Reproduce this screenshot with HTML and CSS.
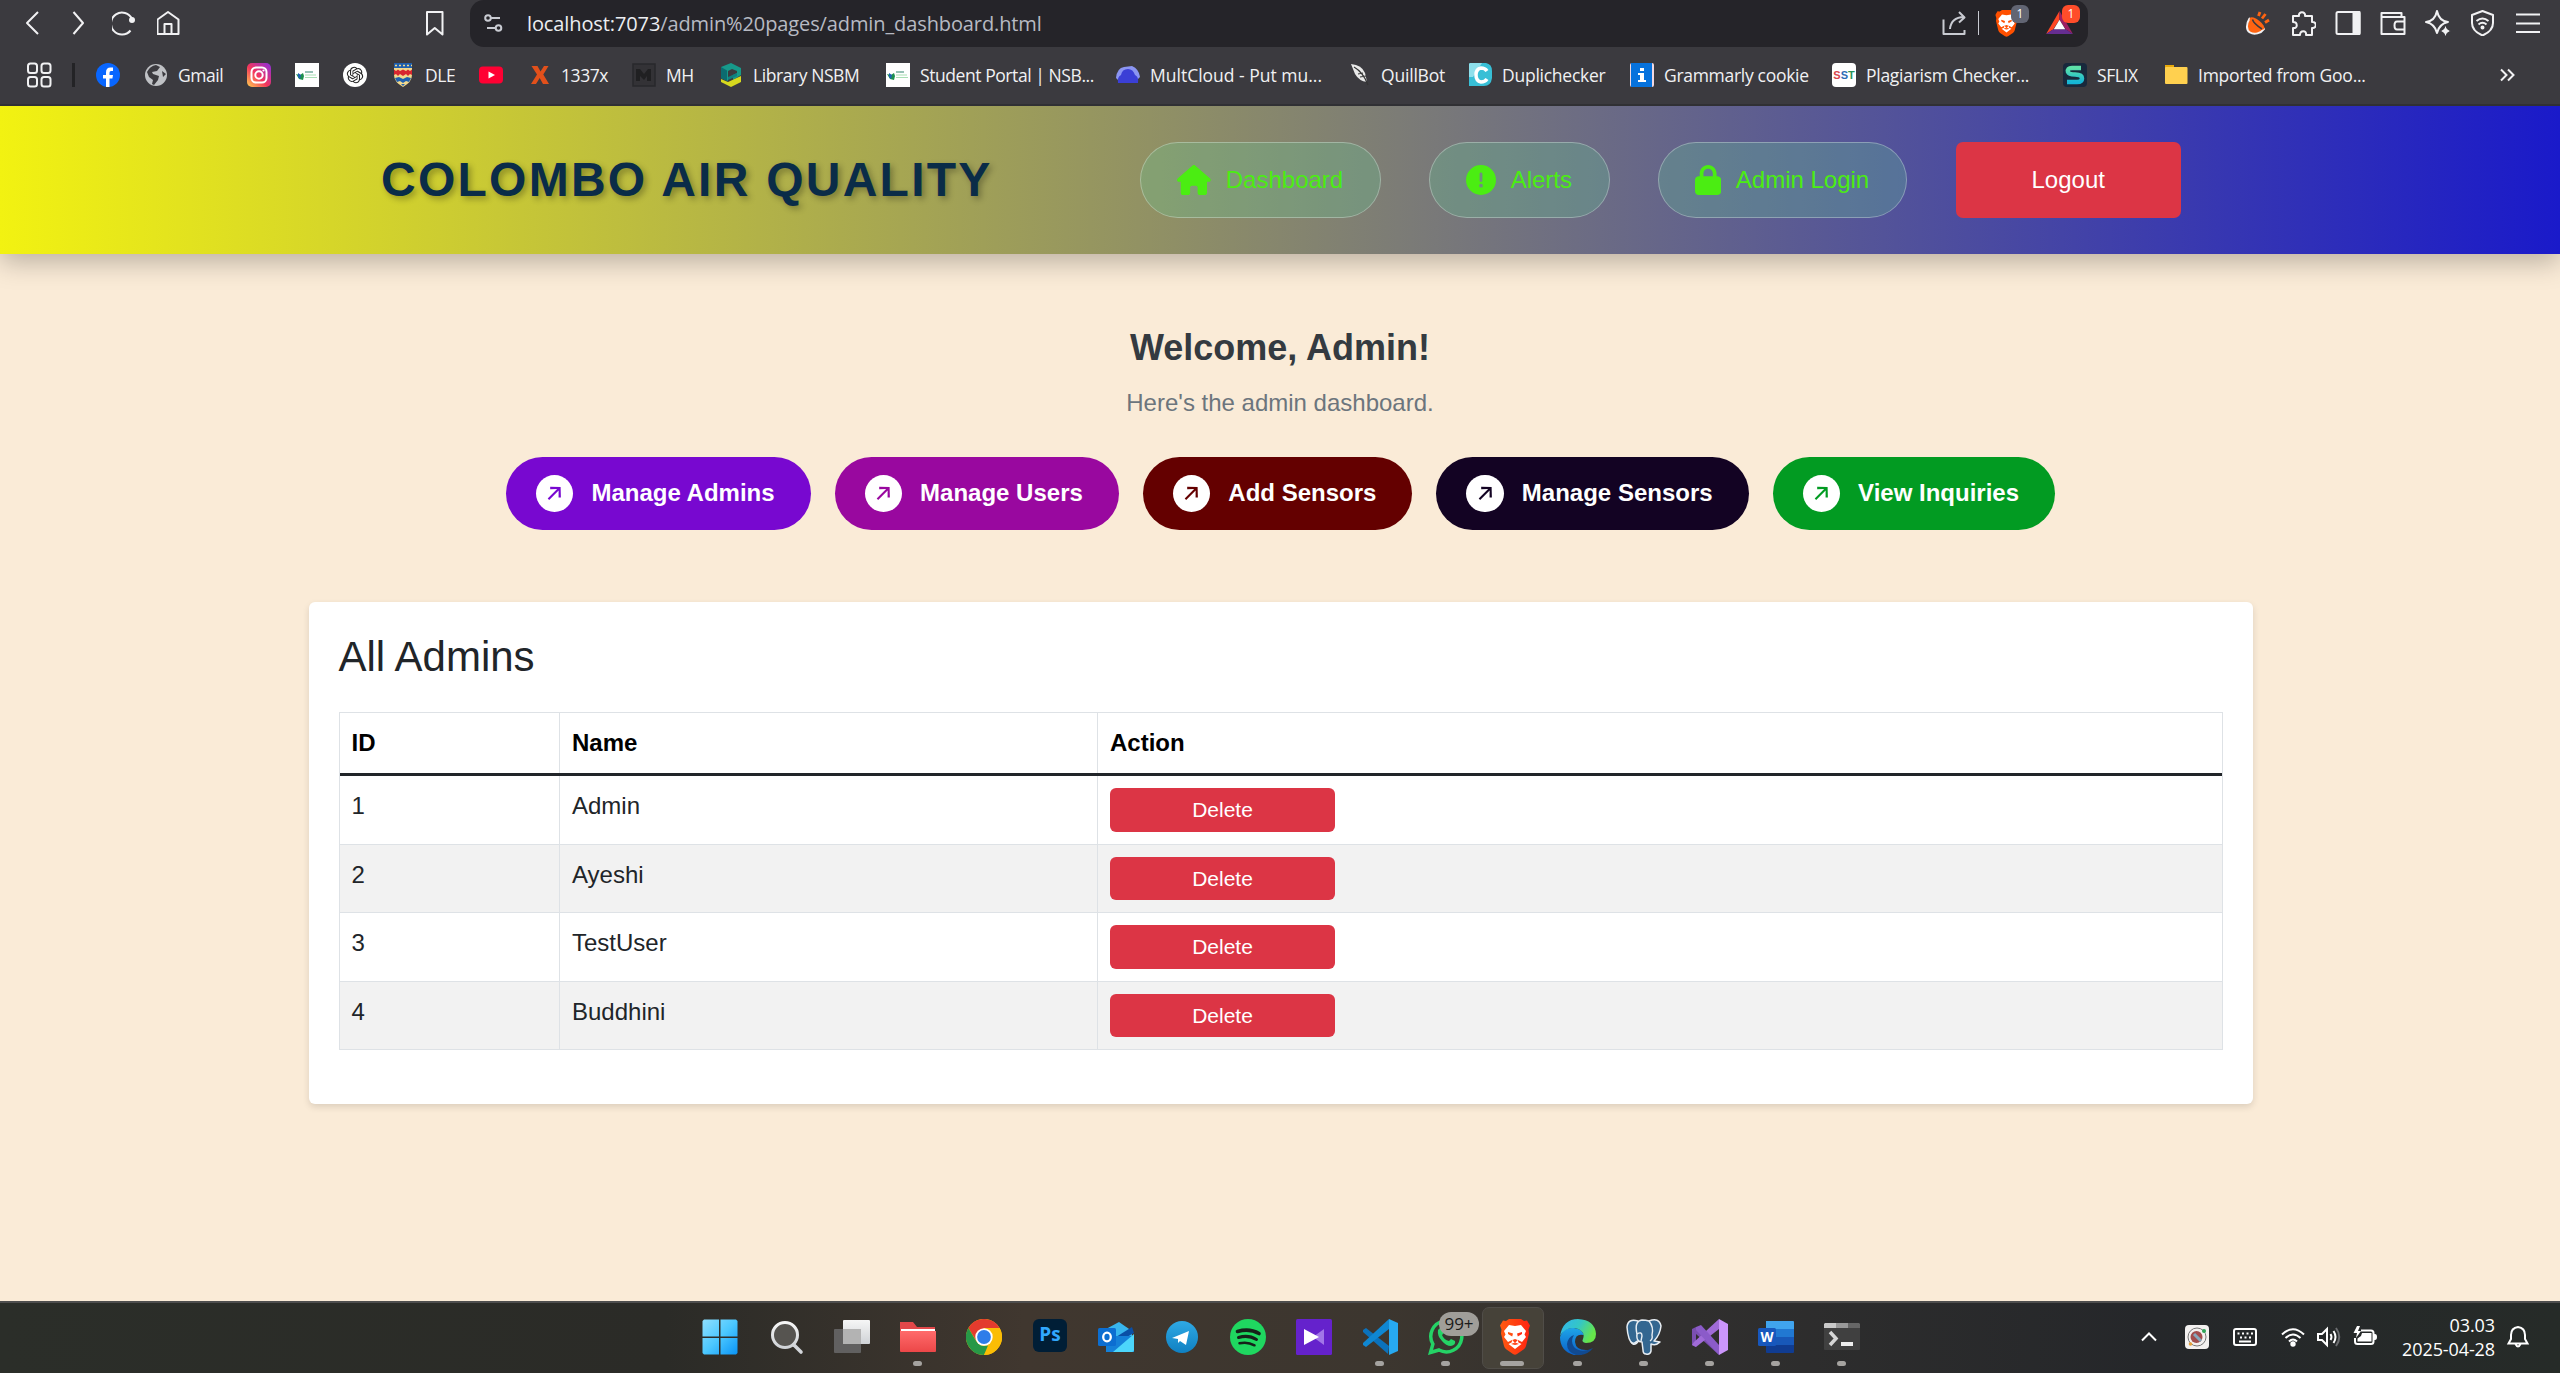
FILE: index.html
```html
<!DOCTYPE html>
<html lang="en">
<head>
<meta charset="utf-8">
<title>Admin Dashboard</title>
<link rel="stylesheet" href="styles.css">
</head>
<body>
<svg class="defs" width="0" height="0" aria-hidden="true">
  <defs>
    <linearGradient id="g-insta" x1="0" y1="1" x2="1" y2="0"><stop offset="0" stop-color="#ffd14f"/><stop offset=".45" stop-color="#f4365b"/><stop offset="1" stop-color="#8a2fe0"/></linearGradient>
    <linearGradient id="g-win" x1="0" y1="0" x2="1" y2="1"><stop offset="0" stop-color="#8fe0ff"/><stop offset=".5" stop-color="#4cc8ff"/><stop offset="1" stop-color="#0a94f5"/></linearGradient>
    <linearGradient id="g-brave" x1="0" y1="0" x2="1" y2="0"><stop offset="0" stop-color="#ff5a10"/><stop offset="1" stop-color="#ff2412"/></linearGradient>
    <linearGradient id="g-folder" x1="0" y1="0" x2="0" y2="1"><stop offset="0" stop-color="#ff6b6b"/><stop offset="1" stop-color="#ec4748"/></linearGradient>
    <linearGradient id="g-tele" x1="0" y1="0" x2="0" y2="1"><stop offset="0" stop-color="#2fa9e4"/><stop offset="1" stop-color="#0f80c2"/></linearGradient>
    <linearGradient id="g-edge1" x1="0" y1="0" x2="1" y2=".4"><stop offset="0" stop-color="#2fb4f2"/><stop offset=".55" stop-color="#35c7c4"/><stop offset="1" stop-color="#66e54a"/></linearGradient>
    <linearGradient id="g-edge2" x1="0" y1="0" x2="0" y2="1"><stop offset="0" stop-color="#1ea5e8"/><stop offset="1" stop-color="#0a5fc8"/></linearGradient>
    <linearGradient id="g-sflix" x1="0" y1="0" x2="0" y2="1"><stop offset="0" stop-color="#5ee2a8"/><stop offset="1" stop-color="#15b6d6"/></linearGradient>
    <linearGradient id="g-grey" x1="0" y1="0" x2="0" y2="1"><stop offset="0" stop-color="#f6f6f6"/><stop offset="1" stop-color="#cfd2d6"/></linearGradient>
    <symbol id="nsbm" viewBox="0 0 24 24"><path fill="#fff" d="M0 0h24v24H0z"/><path fill="#1c8f4d" d="M1 11l4 1 3-2 1 3-1 4-4-1z"/><path fill="#1d62b5" d="M3 10l3 2-1 4-2-2z"/><path stroke="#5f9f8f" stroke-width="1.300" d="M10 9h8"/><path stroke="#a9dfb4" d="M10 12h11M10 14.500h12"/></symbol>
    <symbol id="arrow" viewBox="0 0 14 15"><path fill="currentColor" d="M13.376 11.552l-.264-10.440-10.440-.240.024 2.280 6.960-.048L.2 12.560l1.488 1.488 9.432-9.432-.048 6.912 2.304.024z"/></symbol>
    <symbol id="lion" viewBox="0 0 30 36"><path d="M6 2l3-2h12l3 2 3-.5 3 5-1.500 4 .5 4-3 12.500q-.6 2-2.500 3.500L17 35q-2 1.300-4 0l-6.500-4.500Q4.600 29 4 27L1 14.500l.5-4L0 6.500l3-5z"/><path fill="#fff" d="M9 6l6 1 6-1 5 6-1.500 3.500L26 18l-4 5-4.500-2.200 1 2.700 3 1.500-6.500 5-6.500-5 3-1.500 1-2.700L8 23l-4-5 1.500-2.500L4 12z"/><path d="M8 13l5 1.500-.8 3L8 15zM22 13l-5 1.500.8 3L22 15zM12.500 21L15 24.500 17.500 21 15 20zM11 25l4-1.400 4 1.400-4 1z"/></symbol>
  </defs>
</svg>

<div class="browser">
  <div class="toolbar">
    <div class="nav-controls">
      <svg viewBox="0 0 26 26"><path d="M16 2L5 13l11 11"/></svg>
      <svg viewBox="0 0 26 26"><path d="M6.500 2L16 13 6.500 24"/></svg>
      <svg viewBox="0 0 26 26"><path d="M18.500 20.500A11 11 0 1 1 20 9"/><circle cx="20" cy="10" r="3" fill="#f1f1f3" stroke="none"/></svg>
      <svg viewBox="0 0 26 26"><path d="M.5 9.500L11 2l10.500 7.500V24H.5zM7.500 24v-10h7v10"/></svg>
    </div>
    <svg class="bookmark-toggle" viewBox="0 0 26 26"><path d="M5 2h15.500v22.500l-7.750-6.500L5 24.500z"/></svg>
    <div class="address">
      <svg class="tune" viewBox="0 0 20 20"><circle cx="4" cy="5" r="2.800"/><path d="M7 5h9M3 15h8"/><circle cx="14.500" cy="15" r="2.800"/></svg>
      <span class="url"><span class="host">localhost:7073</span>/admin%20pages/admin_dashboard.html</span>
      <div class="address-actions">
        <svg class="share" viewBox="0 0 26 26"><path d="M2.500 9.500V24h21v-4M9 19q1-11.500 14-12M18 2l5.500 5.500L18 12.500"/></svg>
        <span class="divider"></span>
        <span class="badged"><svg class="shield" viewBox="0 0 30 36" fill="#ff5000"><use href="#lion"/></svg><b class="count grey">1</b></span>
        <span class="badged"><svg class="bat" viewBox="0 0 28 24"><path fill="#ff4724" d="M14 0v9L7.500 19 0 24z"/><path fill="#9e1f63" d="M14 0l14 24-7.500-5L14 9z"/><path fill="#662d91" d="M0 24h28l-7.500-5h-13z"/><path fill="#fff" d="M14 9l6 10H8z"/></svg><b class="count red">1</b></span>
      </div>
    </div>
    <div class="extensions">
      <svg viewBox="0 0 26 26"><path fill="#ff6411" d="M4.500 8.500C1 14 1 20 5 22.500s11 1 14-3.500z"/><ellipse cx="12" cy="13.500" rx="9" ry="3.600" transform="rotate(38 12 13.500)" fill="#ff6411" stroke="none"/><path stroke="#3b3a3f" stroke-width="1.500" d="M7.500 9.500q1 4 9.500 9.500"/><path stroke="#ff6411" stroke-width="2.800" d="M13.500 6L15 2M17 8.500l3.500-4.500M20 12.500l4-2.500"/></svg>
      <svg viewBox="0 0 26 26"><path d="M3 6h6c-1-5 7-5 6 0h7v6c5-1 5 7 0 6v7h-6c1-5-6-5-6 0H3v-7c5 1 5-6 0-6z"/></svg>
      <svg viewBox="0 0 26 26"><rect x="1.500" y="2" width="23" height="22" rx="1.500"/><path fill="#f1f1f3" d="M18.500 2h6v22h-6z"/></svg>
      <svg viewBox="0 0 26 26"><path d="M1.500 3h20v4h3v17h-23zM1.500 7h20M24.500 11.500H17q-2.500 0-2.500 4t2.500 4h7.500"/></svg>
      <svg viewBox="0 0 26 26"><path d="M12 1q2 10 11 11-9 2-11 11-2-9-11-11Q10 11 12 1z"/><path fill="#f1f1f3" stroke="#3b3a3f" stroke-width="1" d="M20.500 15q1 5 5.500 6-4.500 1-5.500 6-1-5-5.500-6 4.500-1 5.500-6z"/></svg>
      <svg viewBox="0 0 26 26"><path d="M12.500 1L23 5v8q0 8-10.500 12.500Q2 21 2 13V5zM6.500 11q6-5 12 0M8.500 14.500q4-3.500 8 0"/><circle cx="12.500" cy="17.500" r="1" fill="#f1f1f3"/></svg>
      <svg viewBox="0 0 26 26"><path d="M1 4.500h24M1 13.500h24M1 22h24"/></svg>
    </div>
  </div>

  <div class="bookmarks">
    <svg class="apps" viewBox="0 0 26 26"><rect x="2" y="1.500" width="9" height="9.500" rx="2.500"/><rect x="15.500" y="1.500" width="9" height="9.500" rx="2.500"/><rect x="2" y="15" width="9" height="9.500" rx="2.500"/><rect x="15.500" y="15" width="9" height="9.500" rx="2.500"/></svg>
    <span class="bar"></span>
    <div class="bm w-fb"><svg viewBox="0 0 24 24"><circle cx="12" cy="12" r="12" fill="#0866ff"/><path fill="#fff" d="M10 24v-8.500H7V12h3v-2.500Q10 4.500 14.500 4.500H17V8h-2q-1.500 0-1.500 1.800V12H17l-.6 3.500h-2.900V24z"/></svg></div>
    <div class="bm w-gmail"><svg viewBox="0 0 24 24"><circle cx="12" cy="12" r="11" fill="#bfc1c5"/><path fill="#3b3a3f" d="M3 9q3-6 9-7l4 2-3 4-5 1 1 2 6 2-1 4-4 5-2-1 1-4-4-3zM18 8l4 3-3 3z"/></svg><span>Gmail</span></div>
    <div class="bm w-icon"><svg viewBox="0 0 24 24"><rect width="24" height="24" rx="5" fill="url(#g-insta)"/><g fill="none" stroke="#fff" stroke-width="2"><rect x="4.500" y="4.500" width="15" height="15" rx="4.500"/><circle cx="12" cy="12" r="3.700"/></g><circle cx="16.500" cy="7.500" r="1.100" fill="#fff"/></svg></div>
    <div class="bm w-icon"><svg viewBox="0 0 24 24"><use href="#nsbm"/></svg></div>
    <div class="bm w-icon"><svg viewBox="0 0 24 24"><circle cx="12" cy="12" r="12" fill="#fff"/><path transform="translate(3.800 3.800) scale(.684)" fill="#222" d="M22.282 9.821a5.985 5.985 0 0 0-.516-4.910 6.046 6.046 0 0 0-6.510-2.900A6.065 6.065 0 0 0 4.981 4.182a5.985 5.985 0 0 0-3.998 2.900 6.046 6.046 0 0 0 .743 7.097 5.980 5.980 0 0 0 .511 4.911 6.051 6.051 0 0 0 6.515 2.900A5.985 5.985 0 0 0 13.260 24a6.056 6.056 0 0 0 5.772-4.206 5.990 5.990 0 0 0 3.998-2.900 6.056 6.056 0 0 0-.748-7.073zm-9.022 12.608a4.476 4.476 0 0 1-2.876-1.041l.142-.080 4.778-2.758a.795.795 0 0 0 .393-.681v-6.737l2.020 1.169a.071.071 0 0 1 .038.052v5.583a4.504 4.504 0 0 1-4.495 4.493zM3.600 18.304a4.471 4.471 0 0 1-.535-3.014l.142.085 4.783 2.759a.771.771 0 0 0 .781 0l5.843-3.369v2.332a.080.080 0 0 1-.033.062L9.740 19.950a4.499 4.499 0 0 1-6.140-1.646zM2.341 7.896a4.485 4.485 0 0 1 2.366-1.973V11.600a.766.766 0 0 0 .388.677l5.815 3.354-2.020 1.169a.076.076 0 0 1-.071 0l-4.830-2.787A4.504 4.504 0 0 1 2.341 7.872zm16.596 3.856l-5.833-3.388L15.119 7.200a.076.076 0 0 1 .071 0l4.830 2.791a4.494 4.494 0 0 1-.676 8.105v-5.678a.790.790 0 0 0-.407-.667zm2.011-3.023l-.142-.085-4.773-2.782a.776.776 0 0 0-.786 0L9.409 9.230V6.897a.066.066 0 0 1 .028-.061l4.830-2.787a4.499 4.499 0 0 1 6.681 4.660zM8.307 12.863l-2.020-1.164a.080.080 0 0 1-.038-.057V6.075a4.499 4.499 0 0 1 7.376-3.454l-.142.081-4.778 2.758a.795.795 0 0 0-.393.682zm1.098-2.365l2.602-1.500 2.607 1.500v2.999l-2.597 1.500-2.607-1.500z"/></svg></div>
    <div class="bm w-dle"><svg viewBox="0 0 24 24"><path fill="#f2d98c" d="M3 0h18v12q0 7-9 12-9-5-9-12z"/><path fill="#1f5fae" d="M3 0h18v5H3z"/><path stroke="#f2d98c" stroke-width="1.600" stroke-dasharray="2 2" d="M4 2.500h17"/><path fill="#d8262f" d="M3 6.500l2 1.500 2-1.500L9 8l3-1.500L15 8l2-1.500L19 8l2-1.500V12l-2-1-2 2-2-2-3 2-3-2-2 2-2-2-2 1z"/><path fill="#1f5fae" d="M4 15l4-1 4 2 4-2 4 1-2 4-3-1-3 2-3-2-3 1zM10 21h4l-2 2z"/></svg><span>DLE</span></div>
    <div class="bm w-icon"><svg viewBox="0 0 24 24"><rect y="3.500" width="24" height="17" rx="4" fill="#ff0033"/><path fill="#fff" d="M9.500 8.500l6.500 3.500-6.500 3.500z"/></svg></div>
    <div class="bm w-1337"><svg viewBox="0 0 24 24"><path fill="#e2501b" d="M4.500 3h6l3 5.500L17 3h4.500l-5.200 8.500L22 21h-6l-3.300-6L9 21H4l6-9.500z"/></svg><span>1337x</span></div>
    <div class="bm w-mh"><svg viewBox="0 0 24 24"><path fill="#333236" stroke="#29282c" stroke-width="1.500" d="M1 1h22v22H1z"/><path fill="#202022" d="M4 18V6h4l4 5 4-5h3v12h-4v-5l-3 4-4-4v5z"/></svg><span>MH</span></div>
    <div class="bm w-lib"><svg viewBox="0 0 24 24"><path fill="#17998a" d="M2 4l10-4 10 5v7l-8 5V12l4-2V8l-5-2-4 2v10l-7-3z"/><path fill="#0c6b70" d="M2 4l6 3.500V18l-6-3z"/><path fill="#0f7f80" d="M9 14l9-4v3l-9 4z"/><path fill="#d7d91e" d="M2 16l7 3 13-6v6l-10 5-10-5z"/></svg><span>Library NSBM</span></div>
    <div class="bm w-student"><svg viewBox="0 0 24 24"><use href="#nsbm"/></svg><span>Student Portal | NSB...</span></div>
    <div class="bm w-mult"><svg viewBox="0 0 24 24"><path fill="#8b95f2" d="M0 15Q1 5 8 4l8-1q7 3 8 11l-4 4H3z"/><path fill="#3b3fd6" d="M2 20q-1-6 3-8 1-6 7-6 5 0 7 6 4 2 3 8z"/></svg><span>MultCloud - Put mu...</span></div>
    <div class="bm w-quill"><svg viewBox="0 0 24 24"><path fill="#e9e9e9" d="M4 1q11 1 14 9l2 9q-8-1-12-8z"/><path stroke="#333" stroke-width="1.200" fill="none" d="M7 4q9 5 14 18M11 11l5-1M13 14l6-1"/></svg><span>QuillBot</span></div>
    <div class="bm w-dup"><svg viewBox="0 0 24 24"><path fill="#38bfd6" d="M2 0h16q6 1 6 8v7q-1 8-8 8H1V1z"/><path fill="#8ee0ec" d="M2 0h12L5 14H1V1z"/><path fill="none" stroke="#fff" stroke-width="3.500" d="M19 8q-2-3-6-3-5 1-5 7t5 7q4 0 6-3"/></svg><span>Duplichecker</span></div>
    <div class="bm w-gram"><svg viewBox="0 0 24 24"><rect width="24" height="24" rx="2" fill="#f2d9e2"/><rect x="1" width="21" height="24" fill="#0672dd"/><path fill="#fff" d="M8 10h6v7h2v2H8v-2h2v-5H8zM10 5h4v3h-4z"/></svg><span>Grammarly cookie</span></div>
    <div class="bm w-sst"><span class="sst"><i>S</i><em>S</em><u>T</u></span><span>Plagiarism Checker...</span></div>
    <div class="bm w-sflix"><svg viewBox="0 0 24 24"><rect width="24" height="24" rx="4" fill="#18293c"/><path fill="none" stroke="url(#g-sflix)" stroke-width="4.500" d="M18 5H9q-5 0-4 4 1 2.500 7 2.500 7 0 7 4 0 3.500-5 3.500H4"/></svg><span>SFLIX</span></div>
    <div class="bm w-folder"><svg viewBox="0 0 24 24"><path fill="#e8a90c" d="M1 2h9v5H1z"/><rect x="1" y="4" width="22.500" height="17" rx="1" fill="#ffd04f"/></svg><span>Imported from Goo...</span></div>
    <svg class="more" viewBox="0 0 16 16"><path d="M2 2.500L7.500 8 2 13.500M9 2.500L14.500 8 9 13.500"/></svg>
  </div>
</div>

<main class="page">
  <header class="site-header">
    <h1>COLOMBO AIR QUALITY</h1>
    <nav>
      <a class="pill"><svg width="33.750" height="30" viewBox="0 0 576 512"><path d="M575.800 255.500c0 18-15 32.100-32 32.100h-32l.7 160.200c0 2.700-.2 5.400-.5 8.100V472c0 22.100-17.900 40-40 40H392c-22.100 0-40-17.900-40-40v-88c0-17.700-14.300-32-32-32h-64c-17.700 0-32 14.300-32 32v88c0 22.100-17.900 40-40 40h-80c-22.100 0-40-17.900-40-40V287.600H32c-18 0-32-14-32-32.100 0-9 3-17 10-24L266.400 8c7-7 15-8 22-8s15 2 21 7l255.400 224.500c8 7 12 15 11 24z"/></svg>Dashboard</a>
      <a class="pill"><svg width="30" height="30" viewBox="0 0 512 512"><path d="M256 512a256 256 0 1 0 0-512 256 256 0 1 0 0 512zm0-384c13.300 0 24 10.700 24 24v112c0 13.300-10.700 24-24 24s-24-10.700-24-24V152c0-13.300 10.700-24 24-24zm-32 224a32 32 0 1 1 64 0 32 32 0 1 1-64 0z"/></svg>Alerts</a>
      <a class="pill"><svg width="26.250" height="30" viewBox="0 0 448 512"><path d="M144 144v48h160v-48c0-44.200-35.800-80-80-80s-80 35.800-80 80zm-64 48v-48C80 64.500 144.500 0 224 0s144 64.500 144 144v48h16c35.300 0 64 28.700 64 64v192c0 35.300-28.700 64-64 64H64c-35.300 0-64-28.700-64-64V256c0-35.300 28.700-64 64-64h16z"/></svg>Admin Login</a>
      <button class="logout">Logout</button>
    </nav>
  </header>

  <section class="welcome">
    <h2>Welcome, Admin!</h2>
    <p>Here's the admin dashboard.</p>
  </section>

  <div class="actions">
    <a class="action violet"><span><svg><use href="#arrow"/></svg></span><b>Manage Admins</b></a>
    <a class="action magenta"><span><svg><use href="#arrow"/></svg></span><b>Manage Users</b></a>
    <a class="action maroon"><span><svg><use href="#arrow"/></svg></span><b>Add Sensors</b></a>
    <a class="action navy"><span><svg><use href="#arrow"/></svg></span><b>Manage Sensors</b></a>
    <a class="action green"><span><svg><use href="#arrow"/></svg></span><b>View Inquiries</b></a>
  </div>

  <section class="card">
    <h3>All Admins</h3>
    <div class="table">
      <div class="row head"><div>ID</div><div>Name</div><div>Action</div></div>
      <div class="row"><div>1</div><div>Admin</div><div><button>Delete</button></div></div>
      <div class="row striped"><div>2</div><div>Ayeshi</div><div><button>Delete</button></div></div>
      <div class="row"><div>3</div><div>TestUser</div><div><button>Delete</button></div></div>
      <div class="row striped"><div>4</div><div>Buddhini</div><div><button>Delete</button></div></div>
    </div>
  </section>
</main>

<footer class="taskbar">
  <div class="apps-row">
    <div class="app"><svg viewBox="0 0 36 36"><path fill="url(#g-win)" d="M2 .5h15v17H.5V2zM18.500.5H34L35.500 2v15.500h-17zM.5 19H17v16.500H2L.5 34zM18.500 19h17v15L34 35.500H18.500z"/></svg></div>
    <div class="app"><svg viewBox="0 0 36 36"><circle cx="17" cy="16" r="12.500" fill="#565450" stroke="url(#g-grey)" stroke-width="3"/><path stroke="#d3d6da" stroke-width="3.600" stroke-linecap="round" d="M26 26l7 7"/></svg></div>
    <div class="app"><svg viewBox="0 0 36 36"><rect x="9" y="1" width="27" height="24" rx="1" fill="url(#g-grey)"/><rect y="10" width="27" height="24" rx="1" fill="#666" fill-opacity=".9"/><path fill="#b3b3b3" d="M9 10h18v15H9z"/></svg></div>
    <div class="app on"><svg viewBox="0 0 36 36"><path fill="#e2484a" d="M0 3h13l4 5h18v12H0z"/><path fill="#fff" d="M1 10h34v3H1z"/><path fill="url(#g-folder)" d="M0 12h36v20q0 1-1 1H1q-1 0-1-1z"/></svg></div>
    <div class="app"><svg viewBox="0 0 36 36"><circle cx="18" cy="18" r="18" fill="#fbbd05"/><path fill="#e33b2e" d="M2.400 9A18 18 0 0 1 33.600 9H18L10.500 22z"/><path fill="#279847" d="M2.400 9l8 13.500Q14 27 18 27l4-.5L18 36A18 18 0 0 1 2.400 9z"/><path fill="#fbbd05" d="M18 9h15.600A18 18 0 0 1 18 36l8-13.500z"/><circle cx="18" cy="18" r="8.700" fill="#fff"/><circle cx="18" cy="18" r="6.900" fill="#2f7de9"/></svg></div>
    <div class="app"><span class="ps">Ps</span></div>
    <div class="app"><svg viewBox="0 0 36 36"><path fill="#38b6ee" d="M8 10l13-7 13 9v8H8z"/><path fill="#0a4fa6" d="M18 18l16-10 2 6-18 10z"/><path fill="#1480d8" d="M8 17h28v16H8z"/><path fill="#4cd6fb" d="M36 15v16q0 2-2 2H15z"/><rect y="9" width="18" height="18" rx="1.500" fill="#0c6ed1"/><ellipse cx="9" cy="18" rx="3.800" ry="4.400" fill="none" stroke="#fff" stroke-width="2.300"/></svg></div>
    <div class="app"><svg viewBox="0 0 36 36"><circle cx="18" cy="18" r="16" fill="url(#g-tele)"/><path fill="#fff" d="M8 19l17-7-3 14-6-4-2 2v-4z"/></svg></div>
    <div class="app"><svg viewBox="0 0 36 36"><circle cx="18" cy="18" r="18" fill="#1fd760"/><g fill="none" stroke="#16211a" stroke-linecap="round"><path stroke-width="3.600" d="M7.500 12.500q12-3.500 21.500 2"/><path stroke-width="3" d="M8.500 18.500q10-3 18 2"/><path stroke-width="2.500" d="M9.500 24.300q8-2 15 2"/></g></svg></div>
    <div class="app"><svg viewBox="0 0 36 36"><rect width="36" height="36" rx="1.500" fill="#6522cc"/><path fill="#a276e8" d="M28 10v16L17 18z"/><path fill="#fff" d="M8 10l15 8-15 8z"/></svg></div>
    <div class="app on"><svg viewBox="0 0 36 36"><path fill="#0b72bc" d="M1 11l3-2 23 18-1 8L1 13z"/><path fill="#0f87d2" d="M27 0L1 24v2l3 2 23-18z"/><path fill="#27a9f1" d="M27 0l9 4v28l-9 4z"/></svg></div>
    <div class="app on"><svg viewBox="0 0 36 36"><path fill="none" stroke="#25d366" stroke-width="3.500" d="M2.500 33.500l2.400-8.400A15.500 15.500 0 1 1 11 31z"/><path fill="#25d366" d="M10 11q3-4 5 0l1 3-2 2q2 5 7 6l2-2 4 2q1 4-4 5-5 0-9-5-5-5-4-11z"/></svg><b class="notify">99+</b></div>
    <div class="app on active"><svg viewBox="-3 0 36 36" fill="url(#g-brave)"><use href="#lion"/></svg></div>
    <div class="app on"><svg viewBox="0 0 36 36"><path fill="url(#g-edge2)" d="M0 18Q3 8 14 9q8 1 10 7-9-2-9 7 1 9 13 8-6 6-14 5Q0 32 0 18z"/><path fill="#114a91" d="M14 16q-4 6 0 12 7 7 19 1-6 8-17 7-9-3-9-11 1-7 7-9z"/><path fill="url(#g-edge1)" d="M0 17Q3 0 18 0q17 1 18 15 0 9-10 9-5-1-3-4 3-8-8-11Q5 8 0 17z"/></svg></div>
    <div class="app on"><svg viewBox="0 0 36 36"><g fill="#336791" stroke="#e8eef3" stroke-width="1.500" stroke-linejoin="round"><path d="M12 2Q2-1 1 8q1 14 6 17 3 1 6-4z"/><path d="M23 2q10-4 12 5-1 9-7 15l6 1q-4 4-9 2v7q-1 4-5 3-3 0-3-4l-1-8q-6 0-5-8Q8 2 16 1q4 0 7 1z"/></g><path fill="none" stroke="#e8eef3" stroke-width="1.400" d="M23 2q5 6 3 14 1 4-2 6M11 22q-4 4-6 1M11 15q5-3 5 2l-1 5"/></svg></div>
    <div class="app on"><svg viewBox="0 0 36 36"><path fill="#7a4fb0" d="M0 10l4-2v20l-4-2zM0 10l4-2 21 23 2 5L4 15z"/><path fill="#a06bd8" d="M0 26l4 2L27 10V0L2 23z"/><path fill="#8b5bc9" d="M4 8l5-2 18 20v10L4 11z"/><path fill="#cb95fb" d="M27 0l9 5v26l-9 5z"/></svg></div>
    <div class="app on"><svg viewBox="0 0 36 36"><path fill="#40a4ee" d="M8 2h27q1 0 1 1v7H8z"/><path fill="#2178d2" d="M8 10h28v8H8z"/><path fill="#1858b8" d="M8 18h28v8H8z"/><path fill="#103c91" d="M8 26h28v7q0 1-1 1H9q-1 0-1-1z"/><rect y="9" width="18" height="18" rx="1.500" fill="#1757bd"/><text x="9" y="23" text-anchor="middle" font-size="13.500" font-weight="700" fill="#fff">W</text></svg></div>
    <div class="app on"><svg viewBox="0 0 36 36"><path fill="#404040" d="M0 9h36v21q0 1-1 1H1q-1 0-1-1z"/><path fill="#c9c9c9" d="M1 4h11v5H0V5z"/><path fill="#999" d="M12 4h12v5H12z"/><path fill="#666" d="M24 4h11l1 1v4H24z"/><path fill="none" stroke="#d6d6d6" stroke-width="3.500" d="M6 13l6 6.500L6 26"/><path stroke="#eee" stroke-width="4" d="M17 25h12"/></svg></div>
  </div>
  <div class="tray">
    <svg class="chev" viewBox="0 0 16 16"><path d="M1 11.500L8 4.500l7 7"/></svg>
    <svg class="tool" viewBox="0 0 24 24"><rect width="24" height="24" rx="4" fill="#f3f1f0" stroke="none"/><circle cx="12" cy="12" r="9" stroke="#777" stroke-width="1"/><circle cx="11.500" cy="12" r="6" fill="#a14e4e" stroke="none"/><path stroke="#86a9bd" stroke-width="3" d="M9 9l7 7"/><circle cx="19" cy="6" r="2" fill="#2fa557" stroke="none"/><circle cx="5.500" cy="19" r="1.800" fill="#e8a33c" stroke="none"/></svg>
    <svg class="keys" viewBox="0 0 24 24"><rect x="1" y="4" width="22" height="16" rx="2"/><path stroke-dasharray="2 2.500" d="M4.500 8.500h16M7 12.500h11"/><path d="M6 16.500h12"/></svg>
    <svg class="wifi" viewBox="0 0 24 24"><path d="M1 9.500q11-10.500 22 0M4.500 13q7.500-7 15 0M8 16.500q4-4 8 0"/><circle cx="12" cy="19" r="1.700" fill="#fff"/></svg>
    <svg class="vol" viewBox="0 0 24 24"><path d="M1 9h4l5-5v16l-5-5H1zM13.500 9q2 3 0 6M16.500 6q4 6 0 12"/><path stroke="#6b6d70" d="M19 3q6.500 9 0 18"/></svg>
    <svg class="batt" viewBox="0 0 24 24"><path d="M8 5.500h10q2.500 0 2.500 2.500v8.500q0 2.500-2.500 2.500H4.500Q2 19 2 16.500V13"/><path fill="#fff" stroke="none" d="M9 8h9.500v8.500H4.500v-3L8 11zM21 9h1q2 0 2 3t-2 3h-1zM4 1L.5 8H4L3 13l5-7H5l2-5z"/></svg>
    <div class="clock"><span>03.03</span><span>2025-04-28</span></div>
    <svg class="bell" viewBox="0 0 24 24"><path d="M12 2q7 1 7 8v4l2.500 4.500h-19L5 14v-4q0-7 7-8zM9.500 19q2.500 5 5 0"/></svg>
  </div>
</footer>
</body>
</html>
```
FILE: styles.css
```css
* { box-sizing: border-box; }
body {
  margin: 0;
  width: 2560px;
  height: 1373px;
  overflow: hidden;
  display: flex;
  flex-direction: column;
  background: #faebd7;
  font-family: "Liberation Sans", Arial, sans-serif;
  font-size: 24px;
  color: #212529;
}
.defs { position: absolute; }
svg { display: block; flex: none; }
h1, h2, h3, p { margin: 0; }
button { border: 0; font-family: inherit; color: #fff; background: #dc3545; }

/* Browser chrome */
.browser {
  height: 106px;
  flex: none;
  background: #3b3a3f;
  border-bottom: 2px solid #303034;
  font-family: "Open Sans", "Noto Sans", sans-serif;
  color: #f1f1f3;
}
.toolbar { display: flex; height: 47px; }
.toolbar svg { fill: none; stroke: #f1f1f3; stroke-width: 2; width: 26px; height: 26px; stroke-linejoin: round; }
.nav-controls { display: flex; align-items: center; gap: 19px; height: 46px; padding-left: 22px; width: 422px; }
.bookmark-toggle { margin: 10px 22px 0 0; }
.address {
  display: flex;
  align-items: center;
  width: 1618px;
  padding: 0 8px 1px 14px;
  background: #252429;
  border-radius: 14px;
}
.toolbar .tune { width: 20px; height: 20px; stroke: #c9cbd2; }
.url { margin-left: 23px; font-size: 20px; letter-spacing: -.11px; color: #b7bac3; white-space: nowrap; }
.host { color: #eceef2; }
.address-actions { display: flex; align-items: center; margin-left: auto; }
.address-actions .share { stroke: #c9cbd2; }
.divider { width: 1px; height: 24px; margin: 0 16px 0 11px; background: #c9cbd2; }
.badged { position: relative; width: 51px; height: 47px; padding-top: 10px; }
.badged:last-child { width: 34px; }
.toolbar .badged svg { stroke: none; }
.toolbar .shield { fill: #ff5000; width: 23px; height: 27px; }
.toolbar .bat { width: 27px; height: 23px; margin-top: 1px; }
.count {
  position: absolute;
  top: 5px;
  left: 16px;
  width: 18px;
  height: 18px;
  border-radius: 6px;
  font-size: 12px;
  font-weight: 400;
  line-height: 18px;
  text-align: center;
  color: #fff;
}
.grey { background: #626573; }
.red { background: #ff4d2a; }
.extensions { display: flex; align-items: center; gap: 19px; height: 46px; margin-left: 157px; }

.bookmarks { display: flex; align-items: center; height: 56px; padding-left: 26px; font-size: 17.500px; letter-spacing: -.43px; }
.bookmarks .apps { width: 26px; height: 26px; fill: none; stroke: #f1f1f3; stroke-width: 2; }
.bar { width: 3px; height: 24px; flex: none; margin: 0 21px 0 20px; background: #232326; }
.bm { display: flex; align-items: center; flex: none; gap: 10px; white-space: nowrap; }
.bm svg, .sst { width: 24px; height: 24px; }
.w-fb { width: 48px; }
.w-gmail { width: 103px; }
.w-icon { width: 48px; }
.w-dle { width: 88px; }
.w-1337 { width: 105px; }
.w-mh { width: 87px; }
.w-lib { width: 167px; }
.w-student { width: 230px; }
.w-mult { width: 231px; letter-spacing: 0; }
.w-quill { width: 121px; letter-spacing: -.2px; }
.w-dup { width: 162px; letter-spacing: -.25px; }
.w-gram { width: 202px; letter-spacing: -.3px; }
.w-sst { width: 231px; letter-spacing: -.28px; }
.w-sflix { width: 101px; }
.w-folder { width: 335px; letter-spacing: -.25px; }
.sst { flex: none; border-radius: 4px; background: #fff; font: 700 11px/24px "Liberation Sans", Arial, sans-serif; letter-spacing: 0; text-align: center; }
.sst * { font-style: normal; text-decoration: none; }
.sst i { color: #d9464c; }
.sst em { color: #2c6db5; }
.sst u { color: #28935a; }
.more { width: 16px; height: 16px; fill: none; stroke: #f1f1f3; stroke-width: 2; }

/* Page */
.page { height: 1195px; flex: none; overflow: hidden; }
.site-header {
  display: flex;
  align-items: center;
  height: 148px;
  padding-left: 381px;
  background: linear-gradient(90deg, #f2f211, #1a1aca);
  box-shadow: 0 8px 25px rgba(0, 0, 0, .25);
}
.site-header h1 {
  width: 759px;
  padding-bottom: 2px;
  font-size: 48px;
  letter-spacing: 2.250px;
  color: #0a2c48;
  text-shadow: 3px 3px 6px rgba(0, 0, 0, .3);
  white-space: nowrap;
}
nav { display: flex; gap: 48px; }
.pill {
  display: flex;
  align-items: center;
  gap: 15px;
  height: 76px;
  padding: 0 36.500px 0 36px;
  border: 1.500px solid rgba(255, 255, 255, .3);
  border-radius: 38px;
  background: rgba(100, 200, 150, .28);
  color: #4bed12;
  white-space: nowrap;
}
.pill svg { fill: currentColor; }
.logout { width: 225px; height: 76px; margin-left: 1px; border-radius: 7px; font-size: 24px; }

.welcome { padding-top: 73px; text-align: center; }
.welcome h2 { font-size: 36px; line-height: 42px; color: #343a40; }
.welcome p { margin-top: 16px; font-size: 24px; line-height: 36px; color: #6c757d; }

.actions { display: flex; justify-content: center; gap: 24px; margin-top: 36px; padding-left: 1px; }
.action {
  display: flex;
  align-items: center;
  gap: 18px;
  height: 73px;
  padding: 0 36px 0 30px;
  border-radius: 37px;
  color: #fff;
  font-weight: 700;
  white-space: nowrap;
}
.action span { display: flex; align-items: center; justify-content: center; width: 37.500px; height: 37.500px; border-radius: 50%; background: #fff; }
.action b { padding-bottom: 2px; }
.action svg { width: 15px; height: 15px; }
.violet { background: #7808d0; }
.violet span { color: #7808d0; }
.magenta { background: #99089f; }
.magenta span { color: #99089f; }
.maroon { background: #640000; }
.maroon span { color: #640000; }
.navy { background: #130323; }
.navy span { color: #130323; }
.green { background: #029b22; }
.green span { color: #029b22; }

.card {
  width: 1944px;
  height: 502px;
  margin: 72px auto 0 308.500px;
  padding: 30px;
  border-radius: 6px;
  background: #fff;
  box-shadow: 0 3px 7px rgba(0, 0, 0, .12);
}
.card h3 { font-size: 42px; font-weight: 400; line-height: 50px; }
.table { margin-top: 30px; border: 1px solid #dee2e6; border-bottom: 0; }
.row { display: grid; grid-template-columns: 219px 538px 1fr; height: 68.500px; border-bottom: 1px solid #dee2e6; line-height: 36px; }
.row > div { padding: 12px 12px 12px 12.500px; border-left: 1px solid #dee2e6; }
.row > div:first-child { border-left: 0; padding-left: 12px; }
.head { height: 63.300px; border-bottom: 3px solid #212529; color: #000; font-weight: 700; }
.striped { background: #f2f2f2; }
.row button { display: block; width: 225px; height: 43.500px; border-radius: 6px; font-size: 21px; padding: 0; }

/* Taskbar */
.taskbar {
  display: flex;
  height: 72px;
  flex: none;
  border-top: 2px solid #4e4e4e;
  background: linear-gradient(90deg, #2b2e29, #2b2b27 26%, #40372f 40%, #3c362f 54%, #302f2e 66%, #25272a 84%, #262b28);
  font-family: "Open Sans", "Noto Sans", sans-serif;
}
.apps-row { display: flex; padding-left: 687px; width: 2137px; }
.app { position: relative; width: 66px; flex: none; height: 68px; padding: 16px 15px 0; }
.app svg { position: relative; width: 36px; height: 36px; }
.on::after { content: ""; position: absolute; left: 28px; top: 58px; width: 9px; height: 5px; border-radius: 3px; background: #a5a3a0; }
.active::before { content: ""; position: absolute; left: 3px; top: 4px; width: 60px; height: 60px; border: 1px solid #504d48; border-radius: 7px; background: #464239; }
.active::after { left: 21px; width: 24px; }
.ps { display: block; width: 34px; height: 33px; margin: 0 0 0 1px; border-radius: 6px; background: #001e36; color: #31a8ff; font-weight: 700; font-size: 19px; line-height: 30px; text-align: center; }
.notify { position: absolute; left: 26px; top: 9px; width: 40px; height: 24px; border-radius: 12px; background: #a09e99; color: #1b1b1b; font-size: 17px; font-weight: 400; line-height: 24px; text-align: center; }
.tray { display: flex; align-items: center; height: 68px; padding-left: 4px; color: #fff; }
.tray svg { width: 24px; height: 24px; fill: none; stroke: #fff; stroke-width: 2; }
.tray .chev { width: 16px; height: 16px; margin-right: 28px; }
.tool, .keys { margin-right: 24px; }
.wifi, .vol { margin-right: 12px; }
.clock { display: flex; flex-direction: column; align-items: flex-end; width: 118px; margin-right: 11px; font-size: 18px; line-height: 24px; letter-spacing: -.1px; white-space: nowrap; }
```
